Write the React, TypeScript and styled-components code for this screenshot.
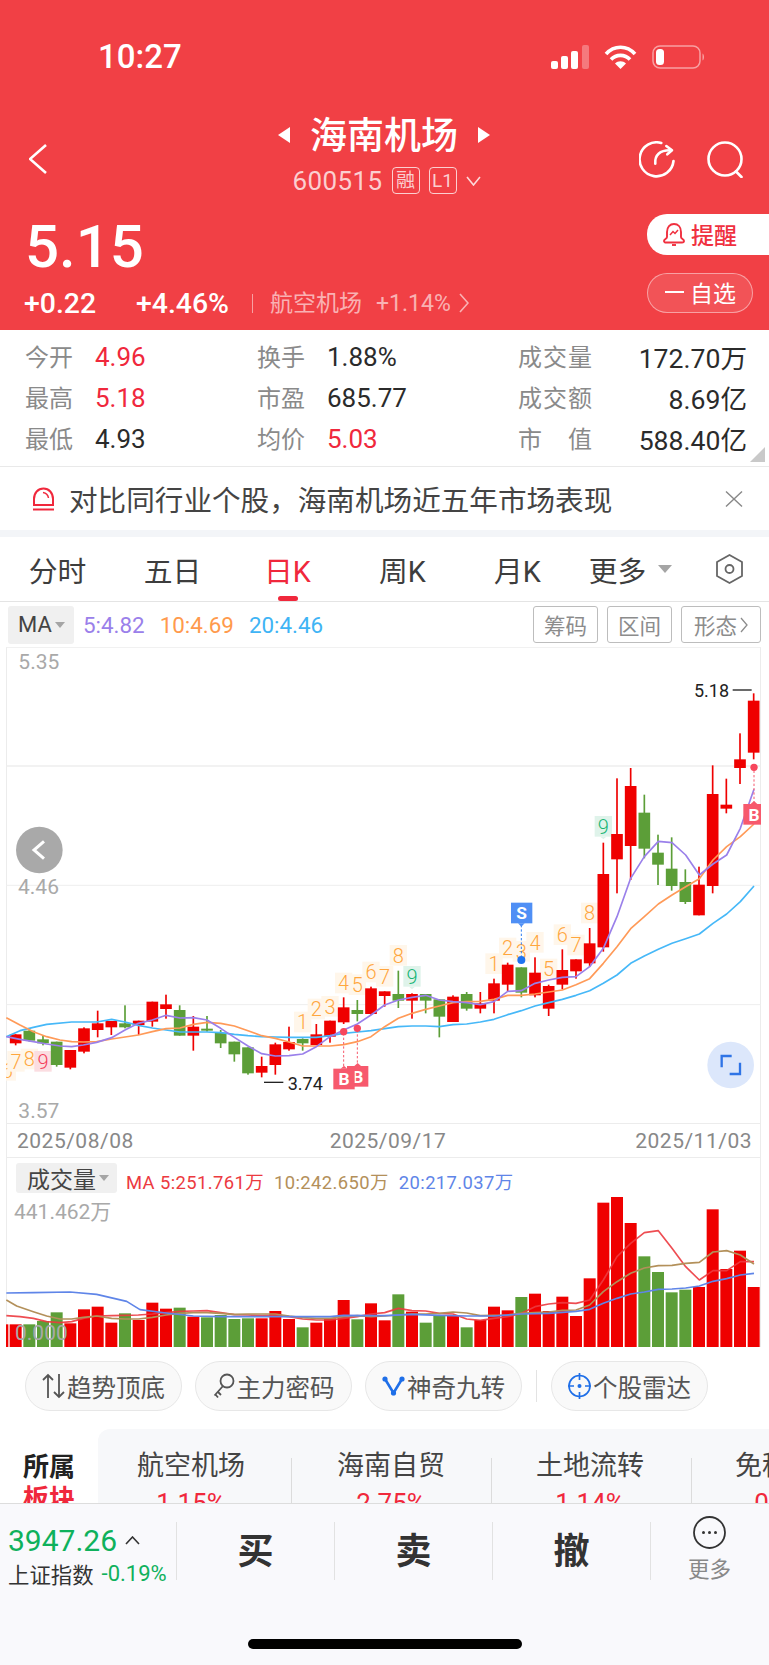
import React, {FC} from "react";
import styled, {createGlobalStyle} from "styled-components";

const sans = `"Roboto", "Noto Sans CJK SC", sans-serif`;

const GlobalStyle = createGlobalStyle`
  html, body {
    margin: 0;
    padding: 0;
    background: #fff;
    font-family: ${sans};
  }
`;

// chart data is in 3x pixels, the same units as the viewBox of each chart
type Candle = [up: boolean, top: number, bottom: number, wickTop: number, wickBottom: number];
const r = true;
const g = false;

const candles: Candle[] = [
  [r, 1183, 1210, 1183, 1216], [g, 1172, 1202, 1165, 1205], [g, 1198, 1210, 1188, 1216], [g, 1205, 1275, 1205, 1280],
  [r, 1230, 1283, 1230, 1288], [r, 1165, 1235, 1162, 1240], [r, 1150, 1170, 1112, 1192], [r, 1143, 1162, 1143, 1185],
  [g, 1150, 1162, 1096, 1165], [r, 1142, 1155, 1142, 1185], [r, 1085, 1145, 1085, 1160], [r, 1093, 1107, 1064, 1136],
  [g, 1110, 1187, 1096, 1187], [r, 1160, 1187, 1128, 1232], [g, 1166, 1172, 1128, 1175], [g, 1178, 1210, 1170, 1224],
  [g, 1205, 1243, 1205, 1265], [g, 1222, 1300, 1222, 1304], [r, 1278, 1298, 1250, 1312], [r, 1213, 1275, 1208, 1304],
  [r, 1206, 1228, 1160, 1232], [g, 1197, 1210, 1195, 1232], [r, 1183, 1215, 1152, 1215], [r, 1142, 1190, 1142, 1208],
  [r, 1102, 1147, 1072, 1152], [g, 1110, 1122, 1080, 1144], [r, 1045, 1122, 1040, 1124], [r, 1054, 1068, 1054, 1100],
  [g, 1062, 1082, 992, 1104], [r, 1062, 1082, 1060, 1136], [g, 1062, 1082, 1062, 1120], [g, 1078, 1130, 1078, 1192],
  [r, 1070, 1146, 1066, 1146], [g, 1062, 1106, 1056, 1112], [r, 1090, 1106, 1056, 1120], [r, 1030, 1082, 1016, 1120],
  [r, 974, 1034, 968, 1054], [g, 982, 1058, 982, 1072], [r, 998, 1066, 952, 1072], [r, 1038, 1106, 1034, 1128],
  [r, 990, 1034, 928, 1048], [r, 958, 994, 958, 1016], [r, 910, 970, 864, 980], [r, 702, 922, 608, 935],
  [r, 582, 658, 415, 760], [r, 438, 618, 384, 720], [g, 518, 626, 464, 655], [g, 638, 674, 584, 735],
  [g, 686, 738, 592, 752], [g, 726, 786, 688, 792], [r, 734, 826, 680, 826], [r, 462, 738, 376, 760],
  [r, 494, 506, 416, 520], [r, 358, 384, 280, 432], [r, 182, 338, 160, 358],
];

const volumes: [boolean, number][] = [
  [r, 553], [g, 553], [g, 543], [g, 517], [r, 550], [r, 508], [r, 500], [r, 548], [g, 520], [r, 540], [r, 488], [r, 506],
  [g, 503], [r, 530], [g, 532], [g, 525], [g, 537], [g, 535], [r, 535], [r, 513], [r, 537], [g, 562], [r, 548], [r, 535],
  [r, 480], [g, 538], [r, 490], [r, 541], [g, 463], [r, 515], [g, 548], [g, 525], [r, 525], [g, 562], [r, 540], [r, 500],
  [r, 511], [g, 471], [r, 461], [r, 513], [r, 470], [r, 528], [r, 415], [r, 188], [r, 171], [r, 249], [g, 349], [g, 396],
  [g, 457], [g, 449], [r, 441], [r, 208], [r, 387], [r, 332], [r, 441],
];

const ma5 = "19,1190 60,1198 100,1205 140,1212 180,1218 215,1220 250,1215 290,1207 335,1193 375,1170 415,1150 457,1140 498,1126 540,1134 580,1133 621,1140 662,1165 703,1192 744,1218 785,1241 826,1248 867,1247 908,1242 949,1220 990,1190 1031,1170 1072,1152 1113,1125 1154,1095 1195,1080 1236,1072 1277,1066 1318,1080 1359,1085 1400,1088 1441,1094 1482,1085 1523,1054 1564,1052 1605,1030 1646,1020 1687,1012 1728,1010 1769,980 1810,925 1851,830 1892,715 1933,650 1975,604 2016,608 2057,645 2098,705 2139,672 2180,645 2221,565 2262,448";
const ma10 = "19,1133 60,1155 100,1175 140,1190 180,1200 215,1205 250,1206 290,1205 335,1197 375,1191 415,1185 457,1175 498,1166 540,1164 580,1153 621,1147 662,1150 703,1158 744,1172 785,1187 826,1195 867,1206 908,1218 949,1218 990,1218 1031,1214 1072,1205 1113,1190 1154,1160 1195,1135 1236,1120 1277,1108 1318,1098 1359,1088 1400,1085 1441,1084 1482,1078 1523,1066 1564,1066 1605,1062 1646,1056 1687,1050 1728,1034 1769,1016 1810,970 1851,920 1892,866 1933,830 1975,792 2016,765 2057,740 2098,716 2139,660 2180,620 2221,590 2262,552";
const ma20 = "19,1190 60,1172 100,1162 140,1153 215,1146 290,1146 335,1138 375,1146 415,1156 457,1164 498,1170 540,1176 580,1176 621,1176 662,1178 703,1183 744,1187 785,1190 826,1191 867,1192 908,1192 949,1192 990,1187 1031,1180 1072,1176 1113,1172 1154,1166 1195,1160 1236,1158 1277,1158 1318,1160 1359,1154 1400,1152 1441,1146 1482,1138 1523,1124 1564,1112 1605,1098 1646,1088 1687,1078 1728,1066 1769,1052 1810,1030 1851,1005 1892,970 1933,948 1975,928 2016,910 2057,896 2098,882 2139,850 2180,822 2221,785 2262,738";

const volMa5 = "19,527 60,530 100,535 140,545 180,548 215,545 250,535 290,528 335,527 375,526 415,525 457,522 498,518 540,514 580,513 621,512 662,518 703,524 744,525 785,527 826,526 867,530 908,537 949,540 990,540 1031,535 1072,530 1113,522 1154,518 1195,505 1236,512 1277,513 1318,520 1359,522 1400,537 1441,541 1482,535 1523,530 1564,520 1605,500 1646,492 1687,488 1728,490 1769,480 1810,420 1851,350 1892,310 1933,278 1975,272 2016,325 2057,380 2098,420 2139,392 2180,392 2221,365 2262,365";
const volMa10 = "19,480 50,498 100,515 140,528 180,537 215,537 250,532 290,528 335,535 375,537 415,537 457,532 498,525 540,520 580,518 621,518 662,520 703,523 744,522 785,522 826,522 867,528 908,533 949,535 990,535 1031,530 1072,527 1113,530 1154,528 1195,525 1236,522 1277,522 1318,520 1359,516 1400,519 1441,527 1482,526 1523,525 1564,520 1605,518 1646,516 1687,511 1728,510 1769,495 1810,455 1851,425 1892,400 1933,384 1975,377 2016,376 2057,370 2098,367 2139,336 2180,332 2221,345 2262,372";
const volMa20 = "19,459 100,458 210,456 290,463 380,484 420,509 498,519 580,528 662,530 744,530 826,530 908,530 990,530 1031,526 1113,527 1154,527 1236,523 1318,526 1400,528 1482,528 1564,522 1646,520 1728,514 1769,508 1810,490 1851,475 1892,462 1933,456 1975,448 2016,447 2057,444 2098,438 2139,424 2180,416 2221,405 2262,400";

type Nine = [x: number, y: number, label: string, tone?: "red" | "green"];
const nines: Nine[] = [
  [22, 1292, "6"], [48, 1265, "7"], [88, 1258, "8"], [129, 1265, "9", "red"],
  [908, 1147, "1"], [949, 1108, "2"], [990, 1100, "3"], [1031, 1030, "4"], [1072, 1035, "5"], [1113, 997, "6"],
  [1154, 1010, "7"], [1195, 947, "8"], [1236, 1010, "9", "green"],
  [1482, 972, "1"], [1523, 925, "2"], [1564, 935, "3"], [1605, 908, "4"], [1646, 988, "5"], [1687, 885, "6"],
  [1728, 916, "7"], [1769, 820, "8"], [1810, 560, "9", "green"],
];

const Page = styled.div`
  width: 769px;
  height: 1665px;
  display: flex;
  flex-direction: column;
  overflow: hidden;
  background: #fff;
  font-family: ${sans};
`;

const Main = styled.main`
  height: 1503px;
  flex: none;
  overflow: hidden;
`;

const Header = styled.header`
  height: 330px;
  background: #f14045;
  color: #fff;
`;

const StatusBar = styled.div`
  height: 69px;
  padding: 45px 64px 0 98px;
  box-sizing: border-box;
  display: flex;
  align-items: center;
  justify-content: space-between;
`;

const Clock = styled.span`
  font-size: 33px;
  font-weight: 500;
  line-height: 24px;
`;

const StatusIcons = styled.div`
  display: flex;
  align-items: center;
  gap: 15px;
`;

const Nav = styled.div`
  display: grid;
  grid-template-columns: 1fr auto 1fr;
  padding: 49px 25px 0 29px;
`;

const NavSide = styled.div<{$end?: boolean}>`
  display: flex;
  align-items: center;
  justify-content: ${p => (p.$end ? "flex-end" : "flex-start")};
  gap: 31px;
  padding-top: 6px;
`;

const TitleBlock = styled.div`
  display: flex;
  flex-direction: column;
  align-items: center;
`;

const TitleRow = styled.div`
  display: flex;
  align-items: center;
  gap: 20px;
  height: 34px;
  margin-left: -5px;
`;

const Title = styled.h1`
  margin: 4px 0 0;
  font-size: 37px;
  font-weight: 500;
  line-height: 34px;
`;

const CodeRow = styled.div`
  display: flex;
  align-items: center;
  gap: 9px;
  margin-top: 15px;
  height: 27px;
  color: rgba(255, 255, 255, 0.75);
`;

const Code = styled.span`
  font-size: 26px;
  letter-spacing: 0.4px;
`;

const Badge = styled.span`
  width: 28px;
  height: 27px;
  box-sizing: border-box;
  display: flex;
  align-items: center;
  justify-content: center;
  border: 1px solid rgba(255, 255, 255, 0.75);
  border-radius: 4px;
  font-size: 19px;
  line-height: 1;
`;

const QuoteRow = styled.div`
  display: flex;
  justify-content: space-between;
  padding: 19px 0 0 24px;
`;

const Price = styled.div`
  font-size: 60px;
  font-weight: 500;
  line-height: 55px;
  padding: 6px 0 0 1px;
`;

const ChangeRow = styled.div`
  display: flex;
  align-items: center;
  margin-top: 14px;
  height: 30px;
  font-size: 28.4px;
  font-weight: 500;
`;

const ChangePct = styled.span`
  margin-left: 40px;
`;

const Divider = styled.span`
  width: 1px;
  height: 19px;
  margin: 0 17px 0 23px;
  background: rgba(255, 255, 255, 0.5);
`;

const Sector = styled.span`
  margin-bottom: 4px;
  font-size: 23px;
  font-weight: 400;
  color: rgba(255, 255, 255, 0.6);
`;

const SectorPct = styled.span`
  margin: 0 8px 0 14px;
  font-size: 23px;
  font-weight: 400;
  color: rgba(255, 255, 255, 0.6);
`;

const QuoteActions = styled.div`
  width: 122px;
  display: flex;
  flex-direction: column;
  align-items: flex-start;
  gap: 18px;
  padding-top: 1px;
`;

const RemindButton = styled.button`
  width: 122px;
  height: 41px;
  padding: 0 0 2px 16px;
  display: flex;
  align-items: center;
  gap: 6px;
  border: 0;
  border-radius: 20px 0 0 20px;
  background: #fff;
  color: #f0303f;
  font: 500 23px ${sans};
`;

const WatchButton = styled.button`
  width: 106px;
  height: 40px;
  box-sizing: border-box;
  padding: 0 0 2px 17px;
  display: flex;
  align-items: center;
  gap: 6px;
  border: 1px solid rgba(255, 255, 255, 0.45);
  border-radius: 20px;
  background: rgba(255, 255, 255, 0.1);
  color: #fff;
  font: 400 23px ${sans};
`;

const Minus = styled.span`
  width: 19px;
  height: 2px;
  background: #fff;
`;

const Stats = styled.section`
  position: relative;
  display: grid;
  grid-template-columns: 232px 261px 1fr;
  grid-auto-rows: 41px;
  padding: 6px 22px 7px 25px;
  border-bottom: 1px solid #e9e9e9;
`;

const Stat = styled.div<{$spread?: boolean}>`
  display: flex;
  align-items: center;
  justify-content: ${p => (p.$spread ? "space-between" : "flex-start")};
`;

const StatLabel = styled.span<{$wide?: boolean}>`
  width: ${p => (p.$wide ? "74px" : "70px")};
  margin-bottom: 3px;
  font-size: 24px;
  color: #8a8a8a;
  ${p => p.$wide && "text-align-last: justify;"}
  ${p => !p.$wide && "flex: none;"}
`;

const StatValue = styled.span<{$up?: boolean; $large?: boolean}>`
  font-size: ${p => (p.$large ? "26.6px" : "26px")};
  color: ${p => (p.$up ? "#f0283c" : "#2b2b2b")};
`;

const CornerMark = styled.span`
  position: absolute;
  right: 4px;
  bottom: 4px;
  width: 0;
  height: 0;
  border-left: 15px solid transparent;
  border-bottom: 15px solid #c9c9c9;
`;

const Notice = styled.div`
  height: 63px;
  display: flex;
  align-items: center;
  padding: 0 26px 0 32px;
`;

const NoticeText = styled.span`
  flex: 1;
  margin-left: 14px;
  font-size: 28.6px;
  color: #444;
  white-space: nowrap;
`;

const Strip = styled.div`
  height: 7px;
  background: #f3f5f8;
`;

const Tabs = styled.nav`
  height: 65px;
  display: flex;
  align-items: center;
  box-sizing: border-box;
  border-bottom: 1px solid #e4e4e4;
`;

const Tab = styled.span<{$active?: boolean; $tight?: boolean}>`
  position: relative;
  flex: 0 0 115px;
  height: 100%;
  box-sizing: border-box;
  display: flex;
  align-items: center;
  justify-content: center;
  gap: 12px;
  padding-right: ${p => (p.$tight ? "4px" : "0")};
  font-size: 28.8px;
  color: ${p => (p.$active ? "#f0283c" : "#3d3d3d")};
  ${p => p.$active && `
    &::after {
      content: "";
      position: absolute;
      left: 48px;
      bottom: 0;
      width: 20px;
      height: 5px;
      border-radius: 3px;
      background: #f0283c;
    }
  `}
`;

const Caret = styled.span<{$size?: number}>`
  width: 0;
  height: 0;
  border-left: ${p => p.$size ?? 7}px solid transparent;
  border-right: ${p => p.$size ?? 7}px solid transparent;
  border-top: ${p => (p.$size ?? 7) + 1}px solid #a5a5a5;
`;

const TabGear = styled.span`
  margin-left: 26px;
  display: flex;
`;

const MaRow = styled.div`
  height: 45px;
  display: flex;
  align-items: center;
  padding: 0 8px;
`;

const SelectChip = styled.div`
  height: 38px;
  box-sizing: border-box;
  display: flex;
  align-items: center;
  gap: 3px;
  border-radius: 3px;
  background: #f0f0f0;
  color: #444;
`;

const MaChip = styled(SelectChip)`
  width: 66px;
  padding-left: 10px;
  font-size: 22px;
`;

const MaValue = styled.span<{$color: string}>`
  margin-left: ${p => (p.$color === "#9a80ea" ? "9px" : "15px")};
  font-size: 22.4px;
  color: ${p => p.$color};
`;

const ToolGroup = styled.div`
  margin-left: auto;
  display: flex;
  gap: 9px;
`;

const ToolButton = styled.span<{$width: number}>`
  width: ${p => p.$width}px;
  height: 37px;
  box-sizing: border-box;
  display: flex;
  align-items: center;
  justify-content: center;
  gap: 3px;
  border: 1px solid #bdbdbd;
  border-radius: 3px;
  font-size: 21.5px;
  color: #8c8c8c;
`;

const ChartFrame = styled.section`
  margin: 0 8px 0 6px;
  box-shadow: inset 1px 0 #ececec, inset -1px 0 #ececec;
`;

const PriceChart = styled.svg`
  display: block;
  width: 755px;
  height: 476px;
`;

const DateRow = styled.div`
  height: 35px;
  display: flex;
  align-items: center;
  justify-content: space-between;
  padding: 0 9px 0 11px;
  border-top: 1px solid #ececec;
  border-bottom: 1px solid #ececec;
  box-sizing: border-box;
  font-size: 21px;
  letter-spacing: 0.5px;
  color: #888;
`;

const MidDate = styled.span`
  margin-left: 7px;
`;

const VolumeHead = styled.div`
  height: 35px;
  box-sizing: border-box;
  display: flex;
  align-items: flex-start;
  padding: 5px 0 0 10px;
`;

const VolumeChip = styled(SelectChip)`
  width: 101px;
  height: 30px;
  padding-left: 11px;
  font-size: 23px;
`;

const VolumeMa = styled.span<{$color: string; $gap: number}>`
  margin: 5px 0 0 ${p => p.$gap}px;
  font-size: 18.4px;
  letter-spacing: 0.4px;
  color: ${p => p.$color};
`;

const VolumeChart = styled.svg`
  display: block;
  width: 755px;
  height: 154px;
`;

const AxisText = styled.text`
  font: 400 63px ${sans};
  fill: #a9a9a9;
`;

const MarkText = styled.text`
  font: 400 54px ${sans};
  fill: #222;
`;

const NineText = styled.text`
  font: 300 60px ${sans};
  text-anchor: middle;
`;

const TagText = styled.text`
  font: 700 52px ${sans};
  fill: #fff;
  text-anchor: middle;
`;

const Pills = styled.div`
  display: flex;
  align-items: center;
  padding: 14px 0 0 25px;
  gap: 13px;
`;

const Pill = styled.div`
  width: 157px;
  height: 50px;
  box-sizing: border-box;
  display: flex;
  align-items: center;
  justify-content: center;
  gap: 2px;
  border: 1px solid #e7e7e7;
  border-radius: 25px;
  background: #f9f9f9;
  font-size: 24.5px;
  color: #555;
`;

const PillDivider = styled.span`
  width: 1px;
  height: 32px;
  margin: 0 1px;
  background: #e3e3e3;
`;

const SectorRow = styled.section`
  display: flex;
  margin-top: 18px;
`;

const SectorTab = styled.div`
  flex: 0 0 98px;
  padding-top: 22px;
  text-align: center;
  font-size: 26px;
  font-weight: 700;
  line-height: 32px;
  color: #222;
`;

const SectorTabAccent = styled.div`
  color: #f0283c;
`;

const SectorPanel = styled.div`
  flex: 1;
  display: flex;
  height: 120px;
  overflow: hidden;
  border-radius: 12px 0 0 0;
  background: #f7f8fa;
`;

const SectorItem = styled.div<{$width: number; $inset: number}>`
  position: relative;
  flex: 0 0 ${p => p.$width}px;
  box-sizing: border-box;
  padding: 22px ${p => p.$inset}px 0 0;
  text-align: center;

  &::after {
    content: "";
    position: absolute;
    top: 29px;
    right: 0;
    width: 1px;
    height: 60px;
    background: #dcdcdc;
  }
`;

const SectorName = styled.div`
  font-size: 27px;
  line-height: 30px;
  color: #444;
  white-space: nowrap;
`;

const SectorValue = styled.div`
  margin-top: 6px;
  font-size: 26px;
  line-height: 32px;
  color: #f0283c;
`;

const BottomBar = styled.footer`
  flex: 1;
  box-sizing: border-box;
  display: flex;
  flex-direction: column;
  padding-top: 12px;
  border-top: 1px solid #dddddd;
  background: #f9f9fc;
`;

const BarRow = styled.div`
  height: 66px;
  display: flex;
`;

const IndexCell = styled.div`
  width: 177px;
  height: 58px;
  margin-top: 6px;
  padding: 6px 0 0 8px;
  box-sizing: border-box;
  border-right: 1px solid #e2e2e2;
`;

const IndexTop = styled.div`
  display: flex;
  align-items: center;
  gap: 8px;
  height: 24px;
  font-size: 30px;
  color: #0fb15c;
`;

const IndexBottom = styled.div`
  display: flex;
  align-items: center;
  gap: 8px;
  height: 26px;
  margin-top: 8px;
  font-size: 21.4px;
  color: #333;
  white-space: nowrap;
`;

const IndexPct = styled.span`
  font-size: 22px;
  color: #0fb15c;
`;

const ActionCell = styled.div`
  width: 158px;
  height: 58px;
  margin-top: 6px;
  padding-bottom: 6px;
  display: flex;
  align-items: center;
  justify-content: center;
  box-sizing: border-box;
  border-right: 1px solid #e2e2e2;
  font-size: 36px;
  font-weight: 700;
  color: #333;
`;

const MoreCell = styled.div`
  flex: 1;
  display: flex;
  flex-direction: column;
  align-items: center;
  padding-right: 1px;
`;

const MoreLabel = styled.span`
  margin-top: 8px;
  font-size: 21.5px;
  line-height: 26px;
  color: #888;
`;

const HomeBar = styled.div`
  align-self: center;
  width: 274px;
  height: 10px;
  margin-top: 57px;
  border-radius: 5px;
  background: #000;
`;

const Icon = styled.svg`
  display: block;
  flex: none;
`;

const StatusGlyphs: FC = () => (
  <StatusIcons>
    <Icon width="38" height="24" viewBox="0 0 38 24" fill="#fff">
      <rect x="0" y="16" width="7" height="8" rx="2" />
      <rect x="10" y="11" width="7" height="13" rx="2" />
      <rect x="20" y="6" width="7" height="18" rx="2" />
      <rect x="31" y="0" width="7" height="24" rx="2" opacity=".3" />
    </Icon>
    <Icon width="33" height="24" viewBox="0 0 33 24" fill="none" stroke="#fff" strokeWidth="3.6">
      <path d="M2 9 C10 0 23 0 31 9" />
      <path d="M7 14.5 C12 9 21 9 26 14.5" />
      <path d="M16.5 24 L11 18.5 C14 15.5 19 15.5 22 18.5 Z" fill="#fff" stroke="none" />
    </Icon>
    <Icon width="53" height="24" viewBox="0 0 53 24" fill="none">
      <rect x="1" y="1" width="47" height="22" rx="7" stroke="rgba(255,255,255,.5)" strokeWidth="1.5" />
      <rect x="4" y="4" width="8" height="16" rx="3.5" fill="#fff" />
      <path d="M50.5 8.5 C52.5 9.5 52.5 14.5 50.5 15.5 Z" fill="rgba(255,255,255,.5)" />
    </Icon>
  </StatusIcons>
);

const Chevron: FC<{w: number; h: number; sw: number; dir: "left" | "right"; color?: string}> = ({w, h, sw, dir, color = "#fff"}) => (
  <Icon width={w} height={h} viewBox={`0 0 ${w} ${h}`} fill="none" stroke={color} strokeWidth={sw}>
    <polyline points={dir === "left" ? `${w - 1},1 1,${h / 2} ${w - 1},${h - 1}` : `1,1 ${w - 1},${h / 2} 1,${h - 1}`} />
  </Icon>
);

const Candles: FC = () => (
  <>
    {candles.map(([up, top, bottom, wickTop, wickBottom], i) => {
      const x = 47 + 41 * i;
      const fill = up ? "#ef0000" : "#5c9e38";
      return (
        <g key={i} fill={fill}>
          <rect x={x - 2.5} y={wickTop} width="5" height={wickBottom - wickTop} />
          <rect x={x - 17.5} y={top} width="35" height={bottom - top} />
        </g>
      );
    })}
  </>
);

const NineMark: FC<{item: Nine}> = ({item: [x, y, label, tone]}) => {
  const bg = tone === "green" ? "#dff3ea" : tone === "red" ? "#fbdde1" : "#fff6ea";
  const fg = tone === "green" ? "#17b574" : tone === "red" ? "#f4405c" : "#ffa63e";
  return (
    <g>
      <rect x={x - 26} y={y - 32} width="52" height="62" fill={bg} />
      {tone === "green" && <polygon points={`${x - 9},${y + 30} ${x + 9},${y + 30} ${x},${y + 38}`} fill={bg} />}
      <NineText x={x} y={y + 21} fill={fg}>{label}</NineText>
    </g>
  );
};

const BuyTag: FC<{x: number; y: number}> = ({x, y}) => (
  <g>
    <polygon points={`${x - 10},${y} ${x},${y - 9} ${x + 10},${y}`} fill="#f7596d" />
    <rect x={x - 32} y={y} width="64" height="62" fill="#f7596d" />
    <TagText x={x} y={y + 50}>B</TagText>
  </g>
);

const PricePlot: FC = () => (
  <PriceChart viewBox="18 21 2265 1428">
    <g stroke="#eeeeee" strokeWidth="3">
      <line x1="18" x2="2283" y1="22" y2="22" />
      <line x1="18" x2="2283" y1="378" y2="378" strokeWidth="4" />
      <line x1="18" x2="2283" y1="736" y2="736" />
      <line x1="18" x2="2283" y1="1094" y2="1094" />
    </g>
    {nines.map((n, i) => <NineMark key={i} item={n} />)}
    <Candles />
    <g fill="none" strokeWidth="5" strokeLinejoin="round">
      <polyline points={ma20} stroke="#46b8f8" />
      <polyline points={ma10} stroke="#ff9a58" />
      <polyline points={ma5} stroke="#9a80ea" />
    </g>

    <AxisText x="55" y="88">5.35</AxisText>
    <AxisText x="54" y="762">4.46</AxisText>
    <AxisText x="55" y="1435">3.57</AxisText>

    <rect x="792" y="1325" width="58" height="4" fill="#222" />
    <MarkText x="863" y="1350">3.74</MarkText>
    <MarkText x="2082" y="172">5.18</MarkText>
    <rect x="2198" y="148" width="57" height="4" fill="#222" />

    <g stroke="#f7596d" strokeWidth="3" strokeDasharray="7 6">
      <line x1="1031" x2="1031" y1="1180" y2="1280" />
      <line x1="1072" x2="1072" y1="1170" y2="1275" />
      <line x1="2262" x2="2262" y1="392" y2="485" />
    </g>
    <circle cx="1031" cy="1175" r="11" fill="#f7465c" />
    <circle cx="1072" cy="1165" r="11" fill="#f7465c" />
    <circle cx="2262" cy="382" r="11" fill="#f7465c" />
    <BuyTag x={1073} y={1278} />
    <BuyTag x={1032} y={1286} />
    <BuyTag x={2262} y={492} />

    <line x1="1564" x2="1564" y1="855" y2="950" stroke="#2f7df0" strokeWidth="3" strokeDasharray="7 6" />
    <circle cx="1564" cy="960" r="12" fill="#1f74f0" />
    <rect x="1533" y="788" width="64" height="62" fill="#4f8ff5" />
    <polygon points="1554,850 1574,850 1564,860" fill="#4f8ff5" />
    <TagText x="1565" y="838">S</TagText>

    <circle cx="118" cy="630" r="70" fill="#a9a9a9" />
    <polyline points="132,604 102,630 132,656" fill="none" stroke="#fff" strokeWidth="9" />
    <circle cx="2192" cy="1275" r="70" fill="#dce7fb" />
    <g fill="none" stroke="#2f74e6" strokeWidth="7">
      <polyline points="2195,1248 2165,1248 2165,1282" />
      <polyline points="2189,1302 2220,1302 2220,1268" />
    </g>
  </PriceChart>
);

const VolumePlot: FC = () => (
  <VolumeChart viewBox="18 159 2265 462">
    <rect x="18" y="553" width="7" height="68" fill="#ef0000" />
    {volumes.map(([up, top], i) => (
      <rect key={i} x={29 + 41 * i} y={top} width="36" height={622 - top} fill={up ? "#ef0000" : "#5c9e38"} />
    ))}
    <g fill="none" strokeWidth="5" strokeLinejoin="round">
      <polyline points={volMa5} stroke="#ec3a3f" opacity=".9" />
      <polyline points={volMa10} stroke="#b3905a" />
      <polyline points={volMa20} stroke="#5f85e8" />
    </g>
    <AxisText x="42" y="238">441.462万</AxisText>
    <AxisText x="45" y="600">0.000</AxisText>
  </VolumeChart>
);

const App: FC = () => (
  <Page>
    <GlobalStyle />
    <Main>
      <Header>
        <StatusBar>
          <Clock>10:27</Clock>
          <StatusGlyphs />
        </StatusBar>
        <Nav>
          <NavSide>
            <Chevron w={18} h={30} sw={2.6} dir="left" />
          </NavSide>
          <TitleBlock>
            <TitleRow>
              <Icon width="13" height="16" viewBox="0 0 13 16" fill="#fff"><polygon points="13,0 13,16 1,8" /></Icon>
              <Title>海南机场</Title>
              <Icon width="13" height="16" viewBox="0 0 13 16" fill="#fff"><polygon points="0,0 0,16 12,8" /></Icon>
            </TitleRow>
            <CodeRow>
              <Code>600515</Code>
              <Badge>融</Badge>
              <Badge>L1</Badge>
              <Icon width="15" height="10" viewBox="0 0 15 10" fill="none" stroke="rgba(255,255,255,.8)" strokeWidth="1.6">
                <polyline points="1,1 7.5,9 14,1" />
              </Icon>
            </CodeRow>
          </TitleBlock>
          <NavSide $end>
            <Icon width="37" height="37" viewBox="0 0 37 37" fill="none" stroke="#fff" strokeWidth="2.6" strokeLinecap="round">
              <path d="M22.3 2 A17 17 0 1 0 34.5 20" />
              <path d="M16.3 22.7 C15.5 14 21 9.3 30.7 9.3" />
              <path d="M27.3 5 L33 9.3 L28.3 13.3" strokeLinejoin="round" />
            </Icon>
            <Icon width="37" height="37" viewBox="0 0 37 37" fill="none" stroke="#fff" strokeWidth="2.6" strokeLinecap="round">
              <circle cx="18" cy="18" r="16.5" />
              <path d="M29 30.5 L34.5 36" />
            </Icon>
          </NavSide>
        </Nav>
        <QuoteRow>
          <div>
            <Price>5.15</Price>
            <ChangeRow>
              <span>+0.22</span>
              <ChangePct>+4.46%</ChangePct>
              <Divider />
              <Sector>航空机场</Sector>
              <SectorPct>+1.14%</SectorPct>
              <Chevron w={10} h={20} sw={1.6} dir="right" color="rgba(255,255,255,.6)" />
            </ChangeRow>
          </div>
          <QuoteActions>
            <RemindButton>
              <Icon width="22" height="24" viewBox="0 0 22 24" fill="none" stroke="#f0303f" strokeWidth="1.9">
                <path d="M4 15 V10 C4 5 7 2 11 2 C15 2 18 5 18 10 V15 C18 17 21 17 21 19 C21 20 20 20.5 19 20.5 H3 C2 20.5 1 20 1 19 C1 17 4 17 4 15 Z" />
                <path d="M9 23 H13" />
                <path d="M7 13 L10 9.5 L12 11.5 L15 8" strokeWidth="1.5" />
              </Icon>
              提醒
            </RemindButton>
            <WatchButton>
              <Minus />
              自选
            </WatchButton>
          </QuoteActions>
        </QuoteRow>
      </Header>

      <Stats>
        <Stat><StatLabel>今开</StatLabel><StatValue $up>4.96</StatValue></Stat>
        <Stat><StatLabel>换手</StatLabel><StatValue>1.88%</StatValue></Stat>
        <Stat $spread><StatLabel $wide>成交量</StatLabel><StatValue $large>172.70万</StatValue></Stat>
        <Stat><StatLabel>最高</StatLabel><StatValue $up>5.18</StatValue></Stat>
        <Stat><StatLabel>市盈</StatLabel><StatValue>685.77</StatValue></Stat>
        <Stat $spread><StatLabel $wide>成交额</StatLabel><StatValue $large>8.69亿</StatValue></Stat>
        <Stat><StatLabel>最低</StatLabel><StatValue>4.93</StatValue></Stat>
        <Stat><StatLabel>均价</StatLabel><StatValue $up>5.03</StatValue></Stat>
        <Stat $spread><StatLabel $wide>市 值</StatLabel><StatValue $large>588.40亿</StatValue></Stat>
        <CornerMark />
      </Stats>

      <Notice>
        <Icon width="23" height="24" viewBox="0 0 23 24" fill="none" stroke="#f0283c" strokeWidth="2">
          <path d="M2 18 V12 C2 6 6 1.5 11.5 1.5 C17 1.5 21 6 21 12 V18 Z" />
          <path d="M1 22.5 H22" />
          <path d="M11 5.5 C14 6 16 8 16.5 11" strokeWidth="1.5" />
        </Icon>
        <NoticeText>对比同行业个股，海南机场近五年市场表现</NoticeText>
        <Icon width="18" height="16" viewBox="0 0 18 16" fill="none" stroke="#888" strokeWidth="1.4">
          <path d="M1 0.5 L17 15.5 M17 0.5 L1 15.5" />
        </Icon>
      </Notice>
      <Strip />

      <Tabs>
        <Tab>分时</Tab>
        <Tab>五日</Tab>
        <Tab $active>日K</Tab>
        <Tab>周K</Tab>
        <Tab>月K</Tab>
        <Tab $tight>更多<Caret /></Tab>
        <TabGear>
          <Icon width="27" height="30" viewBox="0 0 27 30" fill="none" stroke="#666" strokeWidth="1.8">
            <polygon points="13.5,1 26,8 26,22 13.5,29 1,22 1,8" strokeLinejoin="round" />
            <circle cx="13.5" cy="15" r="4" />
          </Icon>
        </TabGear>
      </Tabs>

      <MaRow>
        <MaChip>MA<Caret $size={5} /></MaChip>
        <MaValue $color="#9a80ea">5:4.82</MaValue>
        <MaValue $color="#ff9a4d">10:4.69</MaValue>
        <MaValue $color="#3fb4f5">20:4.46</MaValue>
        <ToolGroup>
          <ToolButton $width={65}>筹码</ToolButton>
          <ToolButton $width={65}>区间</ToolButton>
          <ToolButton $width={80}>
            形态
            <Chevron w={8} h={16} sw={1.3} dir="right" color="#8c8c8c" />
          </ToolButton>
        </ToolGroup>
      </MaRow>

      <ChartFrame>
        <PricePlot />
        <DateRow>
          <span>2025/08/08</span>
          <MidDate>2025/09/17</MidDate>
          <span>2025/11/03</span>
        </DateRow>
        <VolumeHead>
          <VolumeChip>成交量<Caret $size={5} /></VolumeChip>
          <VolumeMa $color="#ec3a3f" $gap={9}>MA 5:251.761万</VolumeMa>
          <VolumeMa $color="#b3905a" $gap={10}>10:242.650万</VolumeMa>
          <VolumeMa $color="#5f85e8" $gap={10}>20:217.037万</VolumeMa>
        </VolumeHead>
        <VolumePlot />
      </ChartFrame>

      <Pills>
        <Pill>
          <Icon width="23" height="26" viewBox="0 0 23 26" fill="none" stroke="#555" strokeWidth="1.8">
            <path d="M6 25 V2 M1 7 L6 2 L11 7" />
            <path d="M17 1 V24 M12 19 L17 24 L22 19" />
          </Icon>
          趋势顶底
        </Pill>
        <Pill>
          <Icon width="22" height="26" viewBox="0 0 22 26" fill="none" stroke="#555" strokeWidth="1.8">
            <circle cx="14" cy="8" r="6.5" />
            <path d="M10 13 L1.5 22.5 M5 19 L8 22 M2.5 21.5 L5 24.5" />
          </Icon>
          主力密码
        </Pill>
        <Pill>
          <Icon width="23" height="22" viewBox="0 0 23 22" fill="none" stroke="#1f6fe8" strokeWidth="2.6">
            <path d="M3 4 L11.5 18 L20 4" />
            <circle cx="3" cy="4" r="2.6" fill="#1f6fe8" stroke="none" />
            <circle cx="20" cy="4" r="2.6" fill="#1f6fe8" stroke="none" />
            <circle cx="11.5" cy="18" r="2.6" fill="#1f6fe8" stroke="none" />
          </Icon>
          神奇九转
        </Pill>
        <PillDivider />
        <Pill>
          <Icon width="23" height="26" viewBox="0 0 23 26" fill="none" stroke="#1f6fe8" strokeWidth="1.7">
            <circle cx="11.5" cy="13" r="10.5" />
            <circle cx="11.5" cy="13" r="2" fill="#1f6fe8" stroke="none" />
            <path d="M11.5 0 V7 M11.5 19 V26 M0 13 H6 M17 13 H23" />
          </Icon>
          个股雷达
        </Pill>
      </Pills>

      <SectorRow>
        <SectorTab>
          所属
          <SectorTabAccent>板块</SectorTabAccent>
        </SectorTab>
        <SectorPanel>
          <SectorItem $width={194} $inset={8}><SectorName>航空机场</SectorName><SectorValue>1.15%</SectorValue></SectorItem>
          <SectorItem $width={200} $inset={2}><SectorName>海南自贸</SectorName><SectorValue>2.75%</SectorValue></SectorItem>
          <SectorItem $width={200} $inset={4}><SectorName>土地流转</SectorName><SectorValue>1.14%</SectorValue></SectorItem>
          <SectorItem $width={200} $inset={6}><SectorName>免税概念</SectorName><SectorValue>0.82%</SectorValue></SectorItem>
        </SectorPanel>
      </SectorRow>
    </Main>

    <BottomBar>
      <BarRow>
        <IndexCell>
          <IndexTop>
            3947.26
            <Icon width="15" height="9" viewBox="0 0 15 9" fill="none" stroke="#333" strokeWidth="1.6">
              <polyline points="1,8 7.5,1 14,8" />
            </Icon>
          </IndexTop>
          <IndexBottom>上证指数<IndexPct>-0.19%</IndexPct></IndexBottom>
        </IndexCell>
        <ActionCell>买</ActionCell>
        <ActionCell>卖</ActionCell>
        <ActionCell>撤</ActionCell>
        <MoreCell>
          <Icon width="33" height="33" viewBox="0 0 33 33" fill="none" stroke="#333" strokeWidth="1.8">
            <circle cx="16.5" cy="16.5" r="15.5" />
            <g fill="#333" stroke="none">
              <circle cx="10.5" cy="16.5" r="1.5" />
              <circle cx="16.5" cy="16.5" r="1.5" />
              <circle cx="22.5" cy="16.5" r="1.5" />
            </g>
          </Icon>
          <MoreLabel>更多</MoreLabel>
        </MoreCell>
      </BarRow>
      <HomeBar />
    </BottomBar>
  </Page>
);

export default App;
